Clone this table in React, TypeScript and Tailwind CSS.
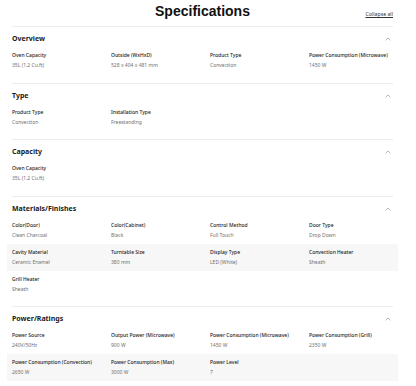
import React from "react";

type Spec = { label: string; value: string };
type Section = { title: string; specs: Spec[] };

const sections: Section[] = [
  {
    title: "Overview",
    specs: [
      { label: "Oven Capacity", value: "35L (1.2 Cu.ft)" },
      { label: "Outside (WxHxD)", value: "528 x 404 x 481 mm" },
      { label: "Product Type", value: "Convection" },
      { label: "Power Consumption (Microwave)", value: "1450 W" },
    ],
  },
  {
    title: "Type",
    specs: [
      { label: "Product Type", value: "Convection" },
      { label: "Installation Type", value: "Freestanding" },
    ],
  },
  {
    title: "Capacity",
    specs: [{ label: "Oven Capacity", value: "35L (1.2 Cu.ft)" }],
  },
  {
    title: "Materials/Finishes",
    specs: [
      { label: "Color(Door)", value: "Clean Charcoal" },
      { label: "Color(Cabinet)", value: "Black" },
      { label: "Control Method", value: "Full Touch" },
      { label: "Door Type", value: "Drop Down" },
      { label: "Cavity Material", value: "Ceramic Enamel" },
      { label: "Turntable Size", value: "380 mm" },
      { label: "Display Type", value: "LED (White)" },
      { label: "Convection Heater", value: "Sheath" },
      { label: "Grill Heater", value: "Sheath" },
    ],
  },
  {
    title: "Power/Ratings",
    specs: [
      { label: "Power Source", value: "240V/50Hz" },
      { label: "Output Power (Microwave)", value: "900 W" },
      { label: "Power Consumption (Microwave)", value: "1450 W" },
      { label: "Power Consumption (Grill)", value: "2350 W" },
      { label: "Power Consumption (Convection)", value: "2650 W" },
      { label: "Power Consumption (Max)", value: "3000 W" },
      { label: "Power Level", value: "7" },
    ],
  },
];

function Chevron() {
  return (
    <svg width="6" height="4" viewBox="0 0 6 4" fill="none" aria-hidden="true">
      <path d="M0.6 3.3 L3 1 L5.4 3.3" stroke="#9a9a9a" strokeWidth="0.7" />
    </svg>
  );
}

function chunk<T>(arr: T[], n: number): T[][] {
  const out: T[][] = [];
  for (let i = 0; i < arr.length; i += n) out.push(arr.slice(i, i + n));
  return out;
}

export default function App() {
  return (
    <div
      className="w-[416px] h-[386px] overflow-hidden bg-white"
      style={{ fontFamily: '"Noto Sans", "Liberation Sans", sans-serif' }}
    >
      <div className="mx-[12px] w-[381px]">
        {/* header */}
        <div className="relative flex h-[26px] items-start justify-center">
          <h1
            className="mt-[1px] text-[14px] font-bold leading-[20px] text-[#111]"
            style={{ fontFamily: '"Liberation Sans", Arial, sans-serif' }}
          >
            Specifications
          </h1>
          <span className="absolute right-0 top-[11px] text-[5.2px] leading-[6px] text-[#333] underline underline-offset-[1px]">
            Collapse all
          </span>
        </div>

        {sections.map((s) => (
          <div key={s.title} className="border-t border-[#ececec] pt-[7px] pb-[8.5px]">
            <div className="flex h-[10px] items-center justify-between">
              <h2 className="text-[7px] font-bold leading-[10px] text-[#1a1a1a]">{s.title}</h2>
              <span className="mr-[2px] flex items-center">
                <Chevron />
              </span>
            </div>
            <div className="mt-[3px]">
              {chunk(s.specs, 4).map((row, ri) => (
                <div
                  key={ri}
                  className={`grid h-[27px] grid-cols-[99px_99px_99px_84px] pt-[5px] ${
                    ri % 2 === 1 ? "-mx-[5px] bg-[#f7f7f7] px-[5px]" : ""
                  }`}
                >
                  {row.map((sp) => (
                    <div key={sp.label} className="flex flex-col whitespace-nowrap">
                      <span className="text-[5px] font-medium leading-[7px] text-[#222]">
                        {sp.label}
                      </span>
                      <span className="mt-[3px] text-[5px] leading-[7px] text-[#707070]">
                        {sp.value}
                      </span>
                    </div>
                  ))}
                </div>
              ))}
            </div>
          </div>
        ))}
      </div>
    </div>
  );
}
